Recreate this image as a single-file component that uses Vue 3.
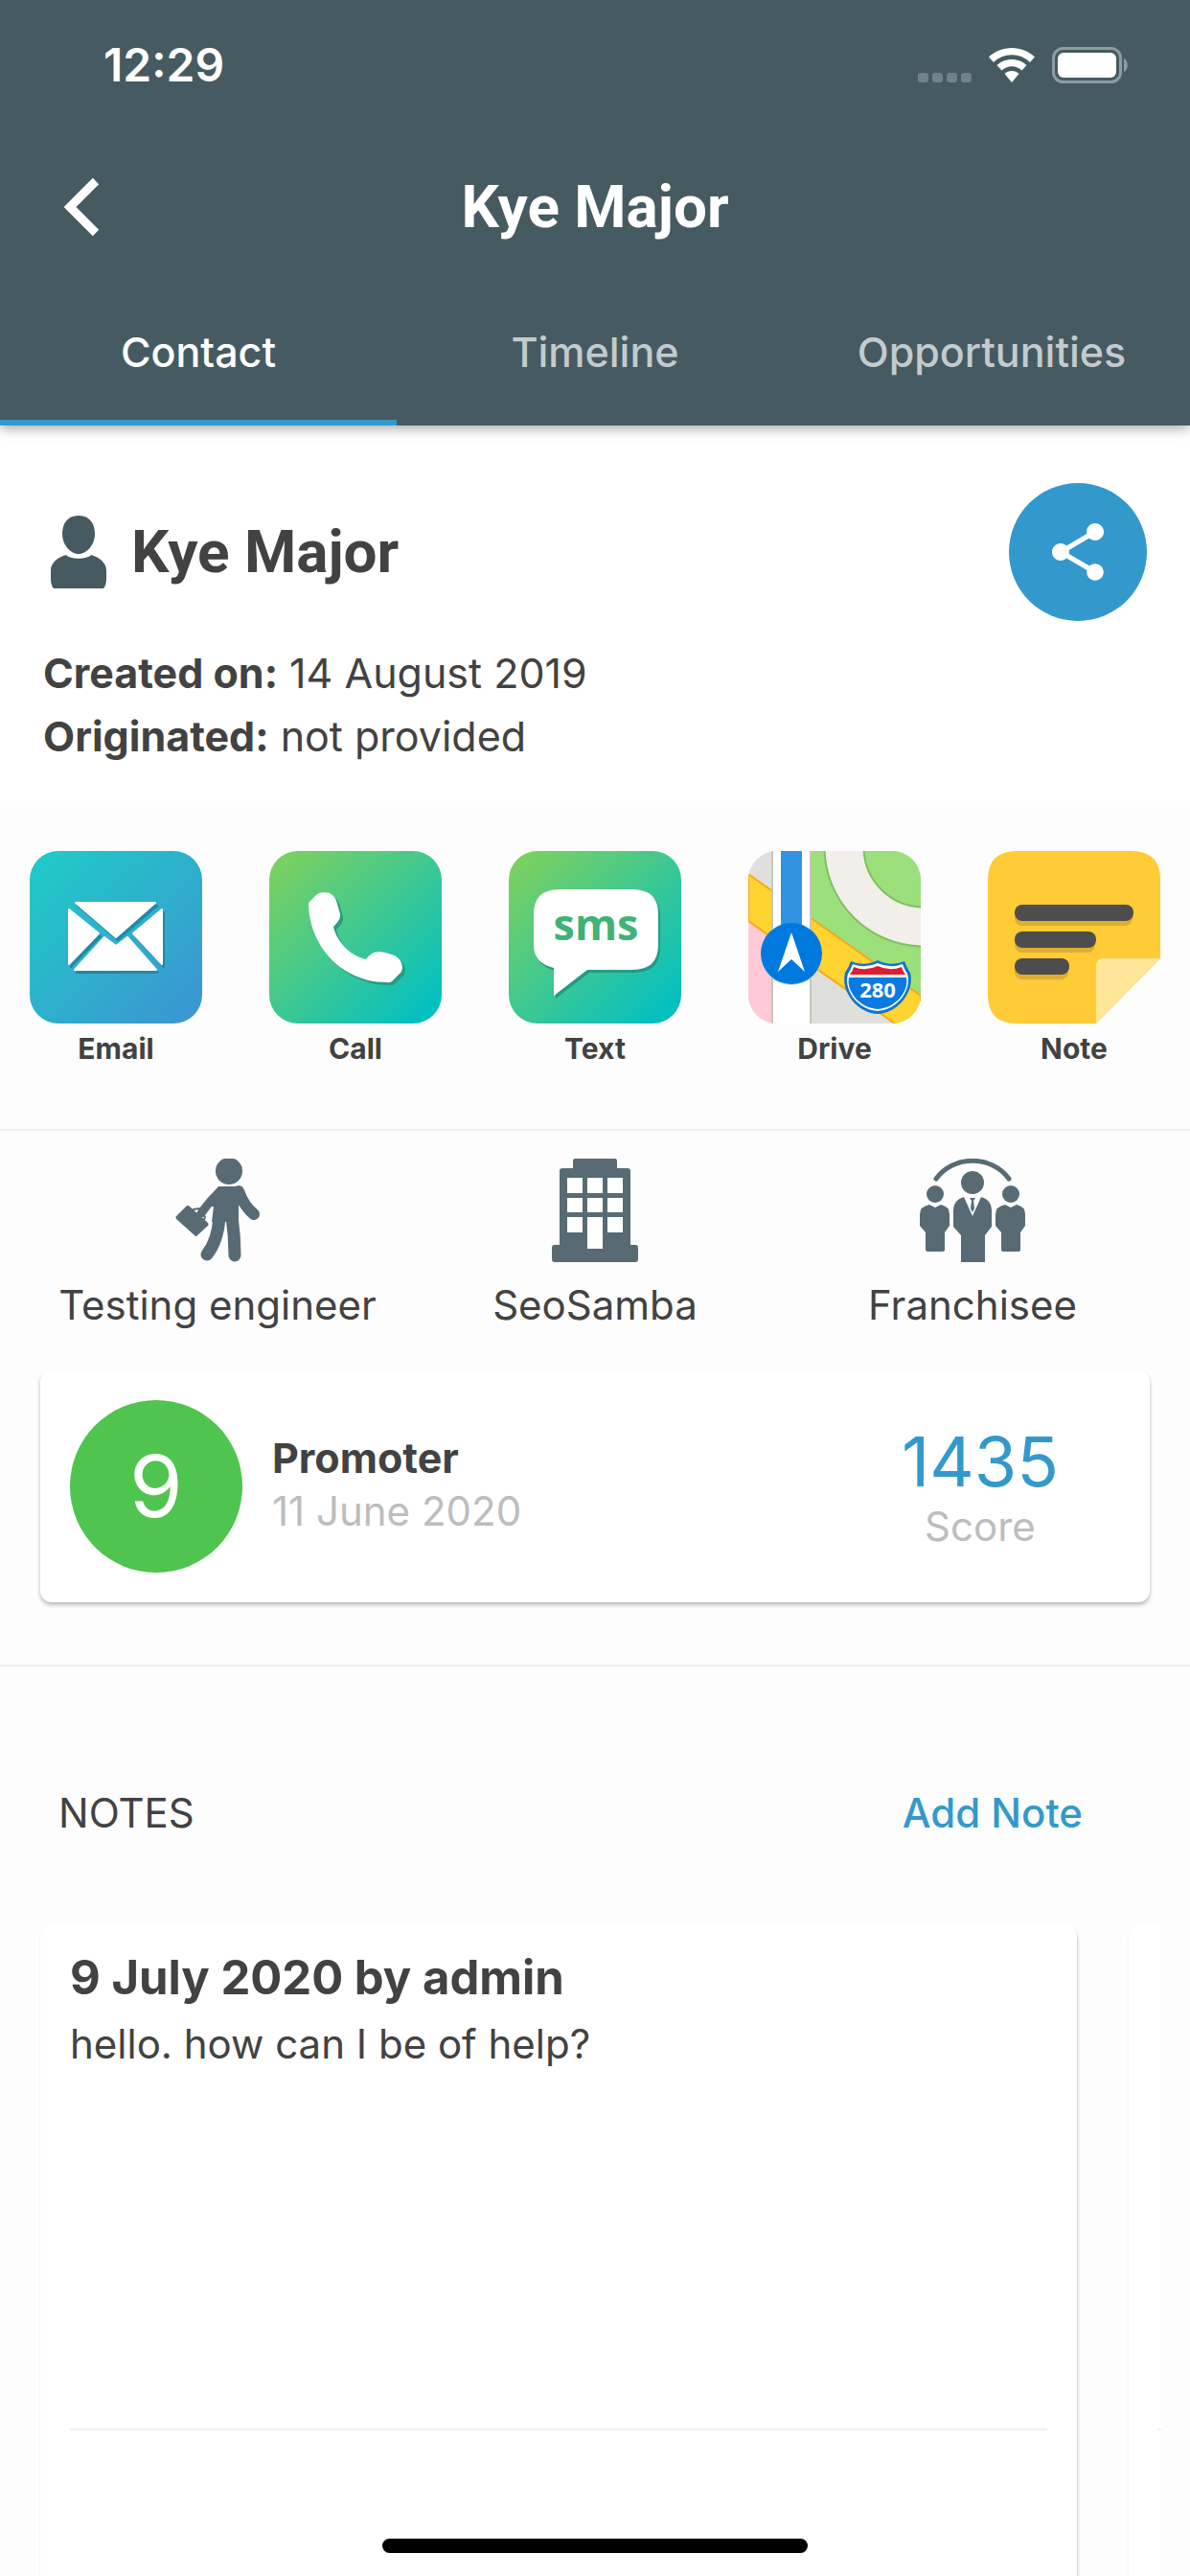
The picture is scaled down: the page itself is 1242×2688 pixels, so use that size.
<template>
  <div class="screen">
    <header class="app-header">
      <div class="status-bar">
        <span class="clock">12:29</span>
        <div class="status-icons">
          <svg class="signal" viewBox="0 0 56 36" aria-hidden="true">
            <rect v-for="x in [0, 15, 30, 45]" :key="x" :x="x" y="26" width="11" height="10" rx="3" />
          </svg>
          <svg class="wifi" viewBox="0 0 48 36" aria-hidden="true">
            <path d="M24 0C33 0 41.500 3.500 48 9.500L43 15C38 10 31.500 7.200 24 7.200S10 10 5 15L0 9.500C6.500 3.500 15 0 24 0Z" />
            <path d="M24 12C30 12 35.500 14.200 39.500 18L34.500 23.500C31.700 20.800 28 19.200 24 19.200S16.300 20.800 13.500 23.500L8.500 18C12.500 14.200 18 12 24 12Z" />
            <path d="M24 24C27 24 29.500 25 31.500 27L24 36L16.500 27C18.500 25 21 24 24 24Z" />
          </svg>
          <svg class="battery" viewBox="0 0 80 38" aria-hidden="true">
            <rect x="1.500" y="1.500" width="70" height="35" rx="10" fill="none" stroke="#8e9da2" stroke-width="3" />
            <rect x="6" y="6" width="61" height="26" rx="6" fill="#fff" />
            <path d="M75 12C80 14 80 24 75 26Z" fill="#8e9da2" />
          </svg>
        </div>
      </div>
      <div class="nav-bar">
        <button class="back-button" aria-label="Back">
          <svg viewBox="0 0 38 62" aria-hidden="true">
            <path d="M34 4L7 31L34 58" fill="none" stroke="#fff" stroke-width="9" />
          </svg>
        </button>
        <h1>{{ contact.name }}</h1>
      </div>
      <nav class="tabs">
        <button
          v-for="tab in tabs"
          :key="tab"
          class="tab"
          :class="{ active: tab === activeTab }"
          @click="activeTab = tab"
        >
          {{ tab }}
        </button>
      </nav>
    </header>

    <section class="profile">
      <div class="profile-top">
        <svg class="person" viewBox="0 0 58 76" aria-hidden="true">
          <path d="M29 0C41 0 46 9 46 19C46 30 38 40 29 40S12 30 12 19C12 9 17 0 29 0Z" />
          <path d="M16 41C20 46 38 46 42 41C52 44 58 50 58 57V66C58 70 57 74 55 76H3C1 74 0 70 0 66V57C0 50 6 44 16 41Z" />
        </svg>
        <h2>{{ contact.name }}</h2>
        <button class="share-button" aria-label="Share">
          <svg viewBox="0 0 24 24" aria-hidden="true">
            <path d="M18 16.080c-.76 0-1.440.3-1.960.77L8.910 12.700c.05-.23.090-.46.090-.7s-.04-.47-.09-.7l7.050-4.110c.54.5 1.250.81 2.040.81 1.660 0 3-1.340 3-3s-1.340-3-3-3-3 1.340-3 3c0 .24.040.47.090.7L8.040 9.810C7.500 9.310 6.790 9 6 9c-1.660 0-3 1.340-3 3s1.340 3 3 3c.79 0 1.500-.31 2.040-.81l7.120 4.160c-.05.21-.08.43-.08.65 0 1.610 1.310 2.920 2.920 2.920 1.610 0 2.920-1.310 2.920-2.920s-1.310-2.920-2.920-2.920z" />
          </svg>
        </button>
      </div>
      <div class="profile-info">
        <p><strong>Created on:</strong> {{ contact.created }}</p>
        <p><strong>Originated:</strong> {{ contact.origin }}</p>
      </div>
    </section>

    <section class="actions">
      <button class="action">
        <svg viewBox="0 0 180 180" aria-hidden="true">
          <defs>
            <linearGradient id="mail-bg" x1="0" y1="0" x2="1" y2="1">
              <stop offset="0.100" stop-color="#22c7c7" />
              <stop offset="1" stop-color="#3c93d2" />
            </linearGradient>
            <g id="envelope" stroke-width="2" stroke-linejoin="round">
              <path d="M48 54H131L90 90Z" />
              <path d="M41 61L72 86L41 118Z" />
              <path d="M138 61L108 86L138 118Z" />
              <path d="M47 124L78 90L90 99L102 90L132 124Z" />
            </g>
          </defs>
          <rect width="180" height="180" rx="30" fill="url(#mail-bg)" />
          <use href="#envelope" x="2" y="3" fill="#2189a5" stroke="#2189a5" />
          <use href="#envelope" fill="#fff" stroke="#fff" />
        </svg>
        <span>Email</span>
      </button>
      <button class="action">
        <svg viewBox="0 0 180 180" aria-hidden="true">
          <defs>
            <linearGradient id="green-bg" x1="0" y1="0" x2="1" y2="1">
              <stop offset="0.050" stop-color="#7bd15f" />
              <stop offset="0.920" stop-color="#04bfc1" />
            </linearGradient>
            <path id="handset" d="M41 54L50 45Q53 43 58 43Q68 43 71 55L74 66Q75 71 67 79C70 93 83 109 101 113Q107 105 114 105Q119 105 131 109Q139 114 139 122L138 126L128 136Q126 138 122 137C75 137 41 98 41 54Z" />
          </defs>
          <rect width="180" height="180" rx="30" fill="url(#green-bg)" />
          <use href="#handset" x="3" y="3" fill="#269e80" />
          <use href="#handset" fill="#fff" />
        </svg>
        <span>Call</span>
      </button>
      <button class="action">
        <svg viewBox="0 0 180 180" aria-hidden="true">
          <defs>
            <path id="bubble" d="M53 40H129Q156 40 156 66V98Q156 124 129 124H82L47 151V122Q26 117 26 98V66Q26 40 53 40Z" />
          </defs>
          <rect width="180" height="180" rx="30" fill="url(#green-bg)" />
          <use href="#bubble" x="2" y="3" fill="#239b84" />
          <use href="#bubble" fill="#fff" />
          <text class="sms-text" x="91" y="93" text-anchor="middle">sms</text>
        </svg>
        <span>Text</span>
      </button>
      <button class="action">
        <svg viewBox="0 0 180 180" aria-hidden="true">
          <defs>
            <clipPath id="map-clip">
              <rect width="180" height="180" rx="30" />
            </clipPath>
          </defs>
          <g clip-path="url(#map-clip)">
            <rect width="180" height="180" fill="#dfe0db" />
            <path d="M64 0H180V160L64 78Z" fill="#9be07a" />
            <circle cx="183" cy="-4" r="83" fill="none" stroke="#82c065" stroke-width="43" />
            <circle cx="183" cy="-4" r="83" fill="none" stroke="#f2efeb" stroke-width="39" />
            <path d="M0 73L26 91V180H0Z" fill="#ffc9d6" />
            <path d="M0 24L180 151V199L0 73Z" fill="#ffd430" stroke="#fba817" stroke-width="2" />
            <rect x="24" width="42" height="180" fill="#c6c6c0" />
            <rect x="26" width="38" height="180" fill="#fff" />
            <rect x="34" width="22" height="90" fill="#3293e3" />
            <circle cx="45" cy="108" r="32" fill="#ccd5dd" />
            <circle cx="45" cy="107" r="32" fill="#0079de" />
            <path d="M45 85L59 126L45 113L31 126Z" fill="#fff" />
            <path d="M107 115Q121 121 135 114Q149 121 163 115Q165 121 169 127C174 147 156 169 135 170C114 169 96 147 101 127Q105 121 107 115Z" fill="#1273cd" />
            <path d="M109 118Q122 123 135 117Q148 123 161 118Q163 124 166 128C171 146 155 166 135 167C115 166 99 146 104 128Q107 124 109 118Z" fill="#fff" />
            <path d="M110 121Q122 126 135 120Q148 126 160 121Q161 125 164 129H106Q109 125 110 121Z" fill="#dc1f2c" />
            <path d="M105 132H165C168 146 154 164 135 165C116 164 102 146 105 132Z" fill="#0b7ade" />
            <text class="route-text" x="135" y="153" text-anchor="middle">280</text>
          </g>
        </svg>
        <span>Drive</span>
      </button>
      <button class="action">
        <svg viewBox="0 0 180 180" aria-hidden="true">
          <path d="M30 0H150Q180 0 180 30V112L113 180H30Q0 180 0 150V30Q0 0 30 0Z" fill="#ffcb37" />
          <path d="M180 112L113 180V120Q113 112 121 112Z" fill="#ffe699" />
          <g fill="#deae2e">
            <rect x="28" y="61" width="123" height="17" rx="8" />
            <rect x="28" y="89" width="84" height="17" rx="8" />
            <rect x="28" y="117" width="56" height="17" rx="8" />
          </g>
          <g fill="#4d4d4d">
            <rect x="28" y="56" width="124" height="17" rx="8" />
            <rect x="28" y="84" width="85" height="17" rx="8" />
            <rect x="28" y="112" width="57" height="17" rx="8" />
          </g>
        </svg>
        <span>Note</span>
      </button>
    </section>

    <section class="overview">
      <div class="roles">
        <div class="role">
          <svg viewBox="0 0 88 108" aria-hidden="true">
            <circle cx="56" cy="13" r="14" />
            <path d="M45 29H67Q70 30 72 34L66 50V66H38L40 50L30 50Q38 36 45 29Z" />
            <g fill="none" stroke="#586b75" stroke-linecap="round" stroke-linejoin="round">
              <path d="M66 34Q72 50 82 58" stroke-width="12" />
              <path d="M46 35Q36 44 27 57" stroke-width="9" />
              <path d="M46 60C45 78 41 90 33 100" stroke-width="13" />
              <path d="M59 60C61 74 62 88 62 101" stroke-width="13" />
              <path d="M19 53L25 52L31 61L29 66" stroke-width="2" />
            </g>
            <path d="M11 50Q13 48 15 50L34 67Q35 69 34 70L23 80Q22 82 20 80L1 63Q0 61 1 60Z" />
          </svg>
          <span>Testing engineer</span>
        </div>
        <div class="role">
          <svg viewBox="0 0 90 108" aria-hidden="true">
            <path d="M24 0H66Q68 0 68 3V10H79Q82 10 82 13V90H87Q90 90 90 93V105Q90 108 87 108H3Q0 108 0 105V93Q0 90 3 90H8V13Q8 10 11 10H22V3Q22 0 24 0Z" />
            <g fill="#fff">
              <rect x="16" y="20" width="16" height="16" />
              <rect x="37" y="20" width="16" height="16" />
              <rect x="58" y="20" width="16" height="16" />
              <rect x="16" y="41" width="16" height="15" />
              <rect x="37" y="41" width="16" height="15" />
              <rect x="58" y="41" width="16" height="15" />
              <rect x="16" y="61" width="16" height="16" />
              <rect x="37" y="61" width="16" height="33" />
              <rect x="58" y="61" width="16" height="16" />
            </g>
          </svg>
          <span>SeoSamba</span>
        </div>
        <div class="role">
          <svg viewBox="0 0 110 108" aria-hidden="true">
            <defs>
              <g id="colleague">
                <circle cx="16" cy="37" r="9" />
                <path d="M10 48L16 51L22 48Q31 50 31 58V70L26 77V95Q26 97 24 97H8Q6 97 6 95V77L0 70V58Q0 50 10 48Z" />
              </g>
            </defs>
            <path d="M17 21C35 -4 75 -4 93 21" fill="none" stroke="#586b75" stroke-width="5" stroke-linecap="round" />
            <use href="#colleague" />
            <use href="#colleague" x="79" />
            <circle cx="55" cy="25" r="12" />
            <path d="M46 40L55 60L64 40Q75 43 75 54V71L68 80V108H43V80L35 71V54Q35 43 46 40Z" />
            <path d="M52 41H58L56 44L57 52L55 56L53 52L54 44Z" />
          </svg>
          <span>Franchisee</span>
        </div>
      </div>
      <div class="score-card">
        <div class="rating">9</div>
        <div class="rating-info">
          <strong>Promoter</strong>
          <span>11 June 2020</span>
        </div>
        <div class="score">
          <span class="score-value">1435</span>
          <span class="score-label">Score</span>
        </div>
      </div>
    </section>

    <section class="notes">
      <div class="notes-header">
        <h3>NOTES</h3>
        <button class="add-note">Add Note</button>
      </div>
      <div class="notes-list">
        <article v-for="note in notes" :key="note.id" class="note-card">
          <div class="note-body">
            <h4>{{ note.title }}</h4>
            <p>{{ note.text }}</p>
          </div>
          <div class="note-footer"></div>
        </article>
      </div>
    </section>

    <div class="home-indicator"></div>
  </div>
</template>

<script setup>
import { ref } from 'vue';

const tabs = ['Contact', 'Timeline', 'Opportunities'];
const activeTab = ref('Contact');

const contact = {
  name: 'Kye Major',
  created: '14 August 2019',
  origin: 'not provided'
};

const notes = [
  { id: 1, title: '9 July 2020 by admin', text: 'hello. how can I be of help?' },
  { id: 2, title: '', text: '' }
];
</script>

<style>
body {
  margin: 0;
  background-color: #fdfdfd;
}
</style>

<style scoped>
.screen {
  display: flex;
  flex-direction: column;
  height: 100vh;
  overflow: hidden;
  background-color: #fdfdfd;
  color: #424242;
  font-family: Inter, "Liberation Sans", sans-serif;
  font-size: 42px;
  line-height: 50px;
}

h1, h2, h3, h4, p {
  margin: 0;
}

button {
  padding: 0;
  border: none;
  background: none;
  color: inherit;
  font: inherit;
  cursor: pointer;
}

svg {
  display: block;
}

.app-header {
  position: relative;
  flex: none;
  background-color: #465a61;
  color: #fff;
  box-shadow: 0 3px 12px rgba(0, 0, 0, 0.35);
}

.status-bar {
  display: flex;
  justify-content: space-between;
  align-items: center;
  height: 136px;
  padding: 0 64px 0 108px;
}

.clock {
  font-size: 48px;
  font-weight: 600;
}

.status-icons {
  display: flex;
  align-items: center;
  gap: 18px;
}

.signal {
  width: 56px;
  height: 36px;
  fill: #71828a;
}

.wifi {
  width: 48px;
  height: 36px;
  fill: #fff;
}

.battery {
  width: 80px;
  height: 38px;
}

.nav-bar {
  display: grid;
  grid-template-columns: 168px 1fr 168px;
  align-items: center;
  height: 160px;
}

.nav-bar h1 {
  text-align: center;
}

.nav-bar h1,
.profile-top h2 {
  font-family: Roboto, sans-serif;
  font-size: 62px;
  font-weight: 700;
  line-height: 72px;
}

.back-button {
  justify-self: start;
  padding-left: 66px;
}

.back-button svg {
  width: 38px;
  height: 62px;
}

.tabs {
  display: grid;
  grid-template-columns: repeat(3, 1fr);
  height: 148px;
}

.tab {
  padding-bottom: 4px;
  border-top: 4px solid transparent;
  border-bottom: 6px solid transparent;
  color: #c3cbce;
  font-weight: 500;
}

.tab.active {
  border-bottom-color: #3399cc;
  color: #fff;
}

.profile {
  flex: none;
  padding: 60px 45px 41px;
  background-color: #fff;
}

.profile-top {
  display: flex;
  align-items: center;
  gap: 26px;
}

.person {
  width: 58px;
  height: 76px;
  margin-left: 8px;
  fill: #465a61;
}

.share-button {
  display: flex;
  justify-content: center;
  align-items: center;
  width: 144px;
  height: 144px;
  margin-left: auto;
  border-radius: 50%;
  background-color: #3399cc;
}

.share-button svg {
  width: 72px;
  height: 72px;
  fill: #fff;
}

.profile-info {
  margin-top: 21px;
  line-height: 66px;
}

.tab,
.profile-info,
.rating-info strong {
  font-size: 43px;
}

.actions {
  flex: none;
  display: flex;
  justify-content: space-between;
  padding: 46px 31px 64px;
  border-bottom: 2px solid #eeeeee;
}

.action {
  display: flex;
  flex-direction: column;
  align-items: center;
  gap: 6px;
  font-size: 30px;
  font-weight: 700;
  line-height: 40px;
}

.action svg {
  width: 180px;
  height: 180px;
}

.sms-text {
  fill: #3fb277;
  font-family: "Open Sans", sans-serif;
  font-size: 45px;
  font-weight: 700;
}

.route-text {
  fill: #fff;
  font-family: "Open Sans", sans-serif;
  font-size: 22px;
  font-weight: 700;
}

.overview {
  flex: none;
  padding: 29px 30px 65px;
  border-bottom: 2px solid #eeeeee;
}

.roles {
  display: grid;
  grid-template-columns: repeat(3, 1fr);
}

.role {
  display: flex;
  flex-direction: column;
  align-items: center;
  gap: 20px;
}

.role svg {
  height: 108px;
  fill: #586b75;
}

.score-card {
  display: flex;
  align-items: center;
  margin: 43px 12px 0;
  padding: 31px;
  border-radius: 12px;
  background-color: #fff;
  box-shadow: 0 3px 4px rgba(0, 0, 0, 0.24), 0 1px 2px rgba(0, 0, 0, 0.08);
}

.rating {
  width: 180px;
  border-radius: 50%;
  background-color: #4fc44f;
  color: #fff;
  font-size: 90px;
  line-height: 180px;
  text-align: center;
}

.rating-info {
  display: flex;
  flex-direction: column;
  gap: 6px;
  margin-left: 31px;
  padding-bottom: 4px;
}

.rating-info span,
.score-label {
  color: #bdbdbd;
}

.score {
  display: flex;
  flex-direction: column;
  align-items: center;
  margin-left: auto;
  margin-right: 64px;
  padding-bottom: 2px;
}

.score-value {
  color: #3399cc;
  font-size: 72px;
  line-height: 86px;
}

.notes {
  display: flex;
  flex-direction: column;
  flex: 1;
  min-height: 0;
}

.notes-header {
  display: flex;
  justify-content: space-between;
  padding: 128px 112px 92px 61px;
}

.notes-header h3 {
  font-size: 42px;
  font-weight: 400;
}

.add-note {
  color: #3399cc;
  font-weight: 500;
}

.notes-list {
  display: flex;
  flex: 1;
  gap: 54px;
  min-height: 0;
  margin-right: 30px;
  padding-left: 42px;
  overflow: hidden;
}

.note-card {
  flex: 0 0 calc(100% - 88px);
  box-sizing: border-box;
  padding: 25px 31px 0;
  border-radius: 12px 12px 0 0;
  background-color: #fff;
  box-shadow: 1px 3px 3px rgba(0, 0, 0, 0.2);
}

.note-body {
  display: flex;
  flex-direction: column;
  gap: 14px;
  height: 500px;
  border-bottom: 2px solid #f0f0f0;
}

.note-body h4 {
  font-size: 49px;
  font-weight: 700;
  line-height: 60px;
}

.note-footer {
  height: 150px;
}

.home-indicator {
  position: fixed;
  bottom: 24px;
  left: 50%;
  width: 444px;
  height: 15px;
  border-radius: 8px;
  background-color: #000;
  transform: translateX(-50%);
}
</style>
